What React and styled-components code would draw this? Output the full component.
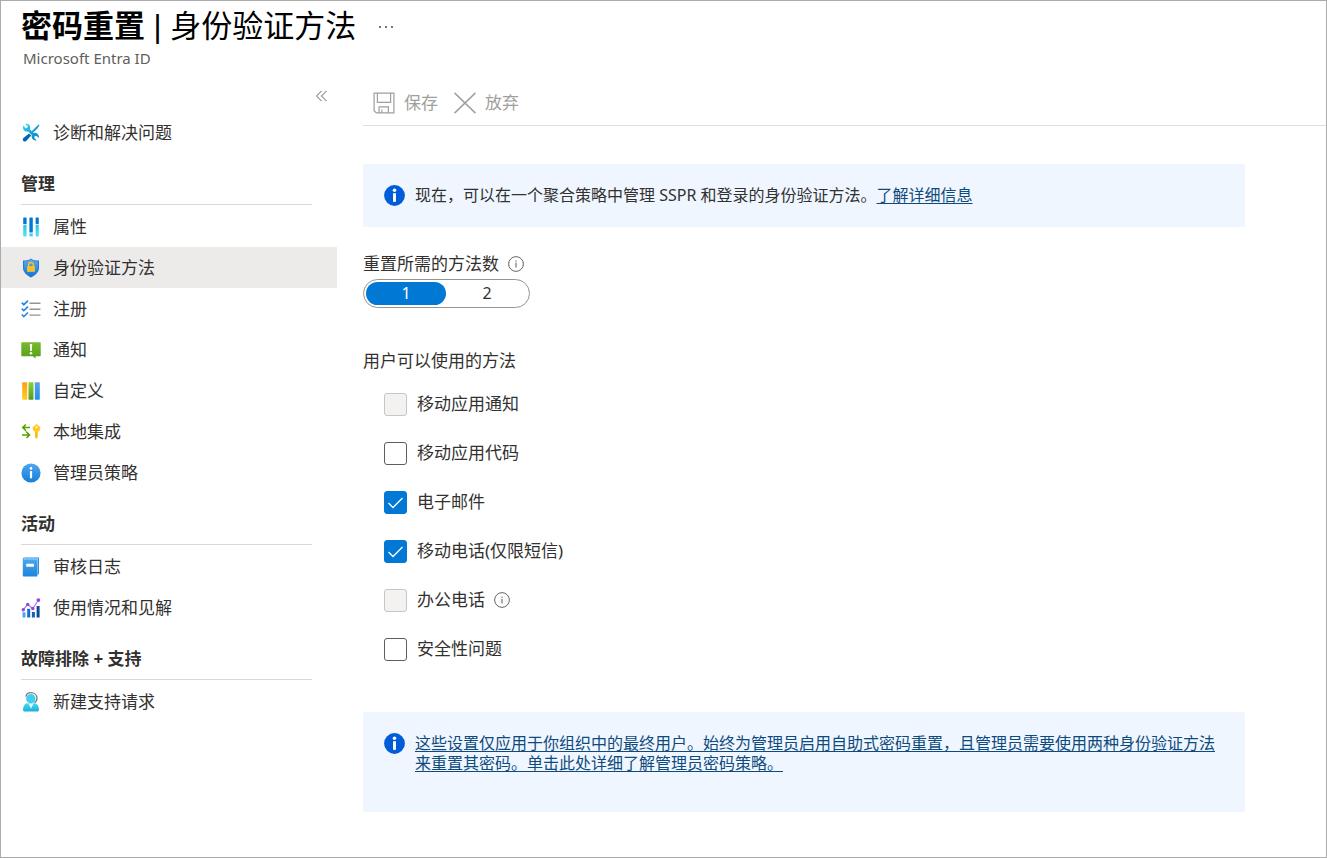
import React, { useState } from 'react'
import styled, { createGlobalStyle } from 'styled-components'

const GlobalStyle = createGlobalStyle`
  * {
    box-sizing: border-box;
  }

  body {
    margin: 0;
    background: #fff;
    color: #323130;
    font-family: 'Noto Sans', 'Noto Sans CJK SC', sans-serif;
    font-size: 17px;
    line-height: 22px;
  }

  button, input {
    font: inherit;
  }

  svg {
    display: block;
    flex: none;
  }
`

const Page = styled.div`
  display: flex;
  flex-direction: column;
  min-height: 100vh;
  border: 1px solid #ababab;
`

const Header = styled.header`
  padding: 4px 20px 0;
`

const TitleRow = styled.div`
  display: flex;
  align-items: center;
  gap: 22px;
`

const Title = styled.h1`
  margin: 0;
  color: #000;
  font-family: 'Liberation Sans', 'Noto Sans CJK SC', sans-serif;
  font-size: 31px;
  font-weight: 400;
  line-height: 44px;

  b {
    font-weight: 700;
  }
`

const MoreButton = styled.button`
  display: flex;
  padding: 0;
  border: 0;
  background: none;
  color: #323130;
`

const Subtitle = styled.p`
  margin: 0;
  padding-left: 2px;
  color: #605e5c;
  font-size: 15px;
  line-height: 18px;
`

const Body = styled.div`
  display: flex;
  flex: 1;
`

const Sidebar = styled.nav`
  flex: none;
  width: 336px;
  padding-top: 23px;
`

const CollapseButton = styled.button`
  display: flex;
  margin: 0 8px 10px auto;
  padding: 0;
  border: 0;
  background: none;
  color: #605e5c;
`

const NavHeading = styled.h2`
  margin: 20px 25px 1px 20px;
  padding-bottom: 9px;
  border-bottom: 1px solid #d8d8d8;
  font-size: 17px;
  font-weight: 700;
  line-height: 22px;
`

const NavList = styled.ul`
  margin: 0;
  padding: 0;
  list-style: none;
`

const NavLink = styled.a`
  display: flex;
  align-items: center;
  gap: 12px;
  height: 41px;
  padding-left: 20px;
  background: ${props => (props.$active ? '#edebe9' : 'transparent')};
  color: inherit;
  text-decoration: none;
`

const Main = styled.main`
  flex: 1;
  min-width: 0;
  padding-left: 26px;
`

const Toolbar = styled.div`
  display: flex;
  align-items: center;
  gap: 16px;
  height: 59px;
  padding: 14px 10px 0;
  border-bottom: 1px solid #e1dfdd;
`

const ToolButton = styled.button`
  display: flex;
  align-items: center;
  gap: 9px;
  padding: 0;
  border: 0;
  background: none;
  color: #a19f9d;
`

const Content = styled.div`
  padding: 38px 81px 40px 0;
`

const Banner = styled.div`
  display: flex;
  align-items: flex-start;
  gap: 10px;
  padding: 21px 24px ${props => (props.$tall ? '39px' : '21px')} 21px;
  border-radius: 2px;
  background: #eff6ff;
  font-size: 16px;
  line-height: 20px;

  p {
    margin: 0;
  }

  a {
    color: #0f4a7c;
    text-decoration: underline;
    text-underline-offset: 2px;
  }
`

const Fieldset = styled.fieldset`
  min-width: 0;
  margin: ${props => props.$top} 0 0;
  padding: 0;
  border: 0;
`

const Legend = styled.legend`
  display: flex;
  align-items: center;
  gap: 9px;
  padding: 0;
`

const Toggle = styled.div`
  display: inline-grid;
  grid-template-columns: 80px 80px;
  gap: 1px;
  margin-top: 4px;
  padding: 2px;
  border: 1px solid #979593;
  border-radius: 15px;
  vertical-align: top;
`

const ToggleOption = styled.label`
  border-radius: 12px;
  font-size: 16px;
  line-height: 23px;
  text-align: center;

  &:has(input:checked) {
    background: #0078d4;
    color: #fff;
  }

  input {
    position: absolute;
    opacity: 0;
    pointer-events: none;
  }
`

const MethodList = styled.div`
  display: grid;
  gap: 25px;
  margin-top: 20px;
  padding-left: 21px;
`

const Method = styled.div`
  display: flex;
  align-items: center;
  gap: 9px;
  height: 24px;
`

const CheckLabel = styled.label`
  display: flex;
  align-items: center;
  gap: 10px;
`

const CheckBox = styled.span`
  display: grid;

  & > * {
    grid-area: 1 / 1;
  }

  svg {
    pointer-events: none;
  }
`

const CheckInput = styled.input`
  width: 23px;
  height: 23px;
  margin: 0;
  border: 1px solid #605e5c;
  border-radius: 3px;
  background: #fff;
  appearance: none;

  &:checked {
    border-color: #0078d4;
    background: #0078d4;
  }

  &:disabled {
    border-color: #c8c6c4;
    background: #f3f2f1;
  }
`

const Icon = ({ size = 20, children }) => (
  <svg width={size} height={size} viewBox="0 0 20 20" fill="none" aria-hidden="true">
    {children}
  </svg>
)

const Gradient = ({ id, from, to }) => (
  <linearGradient id={id} x1="0" y1="0" x2="0" y2="1">
    <stop stopColor={from} />
    <stop offset="1" stopColor={to} />
  </linearGradient>
)

const ToolsIcon = () => (
  <Icon>
    <defs>
      <linearGradient id="wrench" x1="2" y1="2" x2="18" y2="18" gradientUnits="userSpaceOnUse">
        <stop stopColor="#32d4f5" />
        <stop offset="1" stopColor="#0078b8" />
      </linearGradient>
    </defs>
    <path d="M17.7 1.5l.8.8-2.1 3.1-6.2 6.2-1.4-1.4L15 4l2.7-2.5z" fill="#1a9ad7" />
    <path d="M8 10.400l2.200 2.200-5 5.300c-.8.8-2 .8-2.800 0s-.8-2 0-2.800L8 10.400z" fill="#0067b0" />
    <path d="M2.200 2.600l2.500 2.600 1.600-.5.500-1.800-2.400-2c2.300-.6 4.800 1 4.800 3.700 0 .7-.1 1.200-.3 1.700l3.500 3.600c1.500-.5 3.100-.2 4.300 1 1.100 1.100 1.400 2.700 1 4l-2.300-2.200-1.700.5-.5 1.700 2.400 2.300c-2.400.8-5-.8-5-3.600 0-.6.1-1 .2-1.500L7.200 8.400c-1.400.4-3 .1-4.100-1-1.200-1.300-1.500-3.200-.9-4.800z" fill="url(#wrench)" />
  </Icon>
)

const PropertiesIcon = () => (
  <Icon>
    <defs>
      <Gradient id="bar" from="#35c3df" to="#50e6ff" />
    </defs>
    <rect x="2.2" y="0.4" width="3.4" height="6.8" rx=".6" fill="#0078d4" />
    <rect x="2.2" y="8" width="3.4" height="11.6" rx=".6" fill="url(#bar)" />
    <rect x="8.4" y="0.4" width="3.4" height="15.2" rx=".6" fill="#0078d4" />
    <rect x="8.4" y="16.6" width="3.4" height="3" rx=".6" fill="url(#bar)" />
    <rect x="14.6" y="0.4" width="3.2" height="6.8" rx=".6" fill="#0078d4" />
    <rect x="14.6" y="8" width="3.2" height="11.6" rx=".6" fill="url(#bar)" />
  </Icon>
)

const ShieldIcon = () => (
  <Icon>
    <defs>
      <Gradient id="shield" from="#5ea8f0" to="#1673d3" />
    </defs>
    <path d="M10 .4C7.5 2.4 5 2.5 2 2.6v7.1c0 4.7 4 7.7 8 9.9 4-2.2 8-5.2 8-9.9V2.6C15 2.5 12.5 2.4 10 .4z" fill="#1b7adb" />
    <path d="M10 1.3C7.7 3 5.4 3.4 2.9 3.4v6.3c0 4.1 3.5 6.8 7.1 8.9 3.6-2.1 7.1-4.8 7.1-8.9V3.4C14.6 3.4 12.3 3 10 1.3z" fill="url(#shield)" />
    <path d="M7.6 9V7a2.4 2.4 0 0 1 4.8 0v2" stroke="#ffc21a" strokeWidth="1.5" />
    <rect x="6.2" y="8.2" width="7.6" height="5.6" rx=".6" fill="#ffd02e" />
    <path d="M7.4 10h5.2M7.4 12h5.2" stroke="#e8a400" strokeWidth=".8" />
  </Icon>
)

const ChecklistIcon = () => (
  <Icon>
    <path d="M8.5 4.3h11M8.5 10.2h11M8.5 16.1h11" stroke="#949494" strokeWidth="1.4" />
    <path d="M.8 3.7l2 2L7 1.7M.8 9.6l2 2L7 7.6M.8 15.5l2 2L7 13.5" stroke="#2b88e0" strokeWidth="1.7" />
  </Icon>
)

const NotificationIcon = () => (
  <Icon>
    <defs>
      <Gradient id="note" from="#76bc2d" to="#5a9c1c" />
    </defs>
    <path d="M.8 2.2h18.4c.3 0 .5.200.5.500v13c0 .3-.2.500-.5.500h-4.600v2.400L11.800 16.200h-11c-.3 0-.5-.2-.5-.5v-13c0-.3.200-.5.500-.5z" fill="url(#note)" />
    <path d="M8.8 4h2.4l-.4 7H9.200z" fill="#fff" />
    <circle cx="10" cy="13.2" r="1.3" fill="#fff" />
  </Icon>
)

const CustomizeIcon = () => (
  <Icon>
    <defs>
      <Gradient id="yellow" from="#ff9a1f" to="#ffcf1a" />
      <Gradient id="green" from="#86d633" to="#5e9624" />
      <Gradient id="blue" from="#5ea0ef" to="#1b93eb" />
    </defs>
    <rect x="1.2" y="1.3" width="5" height="17.4" rx=".6" fill="url(#yellow)" />
    <rect x="7.5" y="1.3" width="5" height="17.4" rx=".6" fill="url(#green)" />
    <rect x="13.8" y="1.3" width="5" height="17.4" rx=".6" fill="url(#blue)" />
  </Icon>
)

const IntegrationIcon = () => (
  <Icon>
    <path d="M9 5.5H1.8M4.8 2.500l-3 3 3 3" stroke="#57a300" strokeWidth="1.6" />
    <path d="M1 13h7.500M5.500 10l3 3-3 3" stroke="#57a300" strokeWidth="1.6" />
    <path d="M1.500 5.500L8.500 13" stroke="#57a300" strokeWidth="1" />
    <path d="M15.500 2l4 3.500-1 3.200-1.700 1v5.800L15.500 17 14 15.500V9.700l-1.600-1-1-3.200z" fill="#ffc91f" />
    <circle cx="15.500" cy="5.200" r="1" fill="#fff" />
    <path d="M15.400 10v5" stroke="#f29d00" strokeWidth=".6" />
  </Icon>
)

const PolicyIcon = () => (
  <Icon>
    <defs>
      <Gradient id="policy" from="#4fa5f0" to="#147fd9" />
    </defs>
    <circle cx="10" cy="10" r="9.6" fill="url(#policy)" />
    <circle cx="10" cy="5.4" r="1.3" fill="#fff" />
    <rect x="8.9" y="8" width="2.2" height="7.4" rx=".8" fill="#fff" />
  </Icon>
)

const LogIcon = () => (
  <Icon>
    <defs>
      <Gradient id="book" from="#4eaaf0" to="#1b85dc" />
    </defs>
    <path d="M3.5.5h14.3v17.2H3.5z" fill="#a5d3f4" />
    <path d="M17.2.5h.8v16.8h-.8z" fill="#1a7bc8" />
    <path d="M3.2.4h14v1.2h-14c-.6 0-.6.9 0 .9h13.2v16.4c0 .4-.3.7-.7.7H3c-.7 0-1.2-.5-1.2-1.2V1.6C1.800.9 2.400.4 3.200.4z" fill="url(#book)" />
    <rect x="5.2" y="6.8" width="7.8" height="3" rx=".4" fill="#fff" />
  </Icon>
)

const UsageIcon = () => (
  <Icon>
    <rect x="1.5" y="14.3" width="3" height="5.2" fill="#4fa3f2" />
    <rect x="6.2" y="10.8" width="3" height="8.7" fill="#0f6fcf" />
    <rect x="10.9" y="14" width="3" height="5.5" fill="#1b5fae" />
    <rect x="15.6" y="8" width="3" height="11.5" fill="#0a4c94" />
    <path d="M2.2 12l4.4-5.6 5.2 4.2L17.5 2" stroke="#b77af0" strokeWidth="1.3" />
    <circle cx="2.3" cy="11.7" r="1.7" fill="#8a4be0" />
    <circle cx="6.7" cy="6.4" r="1.7" fill="#8a4be0" />
    <circle cx="11.8" cy="10.5" r="1.7" fill="#8a4be0" />
    <circle cx="17.4" cy="2.1" r="1.9" fill="#8a4be0" />
  </Icon>
)

const SupportIcon = () => (
  <Icon>
    <defs>
      <Gradient id="person" from="#4fd8f5" to="#16b0d6" />
    </defs>
    <path d="M4.8 4.6C5.4 2 7.200.7 10 .7c3.200 0 6 2 6 5.600 0 2-.5 3.400-2.700 4.400" stroke="#7a7a7a" strokeWidth="1.3" />
    <path d="M2 17.400c.5-3.700 1.600-6.200 4.800-6.200h6.400c3.200 0 4.300 2.500 4.800 6.200.1 1.200-.7 2.200-1.900 2.200H3.900c-1.200 0-2-1-1.900-2.200z" fill="url(#person)" />
    <path d="M7.400 11.200L10 16.800l2.600-5.600z" fill="#e3f9ff" />
    <circle cx="9.8" cy="6.8" r="4.7" fill="#3fd0ef" />
  </Icon>
)

const SaveIcon = () => (
  <Icon size={22}>
    <path d="M1 1h18v18H3l-2-2zM4 1v8.5h12V1M5.5 19v-5.500h8.500V19M8 19v-3" stroke="currentColor" strokeWidth="1.1" />
  </Icon>
)

const DiscardIcon = () => (
  <Icon size={22}>
    <path d="M.5.8l19 18.4M19.5.8L.5 19.2" stroke="currentColor" strokeWidth="1.3" />
  </Icon>
)

const BannerIcon = () => (
  <Icon size={21}>
    <circle cx="10" cy="10" r="9.9" fill="#015cda" />
    <circle cx="10" cy="5" r="1.7" fill="#fff" />
    <rect x="8.6" y="7.8" width="2.8" height="8.2" fill="#fff" />
  </Icon>
)

const HintIcon = () => (
  <Icon size={16}>
    <circle cx="10" cy="10" r="9.2" stroke="#605e5c" strokeWidth="1.2" />
    <path d="M10 8.5v6M10 5.5v1.6" stroke="#605e5c" strokeWidth="1.3" />
  </Icon>
)

const CheckMark = () => (
  <svg width="23" height="23" viewBox="0 0 23 23" fill="none" aria-hidden="true">
    <path d="M4.500 12l4.500 4.500L18.500 7" stroke="#fff" strokeWidth="1.3" />
  </svg>
)

const manage = [
  { label: '属性', icon: PropertiesIcon },
  { label: '身份验证方法', icon: ShieldIcon, active: true },
  { label: '注册', icon: ChecklistIcon },
  { label: '通知', icon: NotificationIcon },
  { label: '自定义', icon: CustomizeIcon },
  { label: '本地集成', icon: IntegrationIcon },
  { label: '管理员策略', icon: PolicyIcon },
]

const activity = [
  { label: '审核日志', icon: LogIcon },
  { label: '使用情况和见解', icon: UsageIcon },
]

const methods = [
  { id: 'app-notification', label: '移动应用通知', disabled: true },
  { id: 'app-code', label: '移动应用代码' },
  { id: 'email', label: '电子邮件' },
  { id: 'mobile-phone', label: '移动电话(仅限短信)' },
  { id: 'office-phone', label: '办公电话', disabled: true, hint: true },
  { id: 'questions', label: '安全性问题' },
]

function NavItems({ items }) {
  return (
    <NavList>
      {items.map(({ label, icon: ItemIcon, active }) => (
        <li key={label}>
          <NavLink href="#" $active={active} aria-current={active ? 'page' : undefined}>
            <ItemIcon />
            {label}
          </NavLink>
        </li>
      ))}
    </NavList>
  )
}

export default function App() {
  const [required, setRequired] = useState(1)
  const [selected, setSelected] = useState(['email', 'mobile-phone'])

  const toggleMethod = id =>
    setSelected(selected.includes(id) ? selected.filter(item => item !== id) : [...selected, id])

  return (
    <Page lang="zh-CN">
      <GlobalStyle />
      <Header>
        <TitleRow>
          <Title>
            <b>密码重置</b> | 身份验证方法
          </Title>
          <MoreButton aria-label="更多">
            <svg width="16" height="4" viewBox="0 0 16 4" fill="currentColor" aria-hidden="true">
              <circle cx="2" cy="2" r="0.9" />
              <circle cx="8" cy="2" r="0.9" />
              <circle cx="14" cy="2" r="0.9" />
            </svg>
          </MoreButton>
        </TitleRow>
        <Subtitle>Microsoft Entra ID</Subtitle>
      </Header>
      <Body>
        <Sidebar>
          <CollapseButton aria-label="折叠">
            <svg width="14" height="12" viewBox="0 0 14 12" fill="none" stroke="currentColor" aria-hidden="true">
              <path d="M6.500 1l-5 5 5 5M11.500 1l-5 5 5 5" />
            </svg>
          </CollapseButton>
          <NavItems items={[{ label: '诊断和解决问题', icon: ToolsIcon }]} />
          <NavHeading>管理</NavHeading>
          <NavItems items={manage} />
          <NavHeading>活动</NavHeading>
          <NavItems items={activity} />
          <NavHeading>故障排除 + 支持</NavHeading>
          <NavItems items={[{ label: '新建支持请求', icon: SupportIcon }]} />
        </Sidebar>
        <Main>
          <Toolbar>
            <ToolButton disabled>
              <SaveIcon />
              保存
            </ToolButton>
            <ToolButton disabled>
              <DiscardIcon />
              放弃
            </ToolButton>
          </Toolbar>
          <Content>
            <Banner>
              <BannerIcon />
              <p>
                现在，可以在一个聚合策略中管理 SSPR 和登录的身份验证方法。<a href="#">了解详细信息</a>
              </p>
            </Banner>
            <Fieldset $top="26px">
              <Legend>
                重置所需的方法数
                <HintIcon />
              </Legend>
              <Toggle>
                {[1, 2].map(count => (
                  <ToggleOption key={count}>
                    <input
                      type="radio"
                      name="required"
                      checked={required === count}
                      onChange={() => setRequired(count)}
                    />
                    {count}
                  </ToggleOption>
                ))}
              </Toggle>
            </Fieldset>
            <Fieldset $top="42px">
              <Legend>用户可以使用的方法</Legend>
              <MethodList>
                {methods.map(({ id, label, disabled, hint }) => (
                  <Method key={id}>
                    <CheckLabel>
                      <CheckBox>
                        <CheckInput
                          type="checkbox"
                          disabled={disabled}
                          checked={selected.includes(id)}
                          onChange={() => toggleMethod(id)}
                        />
                        {selected.includes(id) && <CheckMark />}
                      </CheckBox>
                      {label}
                    </CheckLabel>
                    {hint && <HintIcon />}
                  </Method>
                ))}
              </MethodList>
            </Fieldset>
            <Fieldset as="div" $top="51px">
              <Banner $tall>
                <BannerIcon />
                <p>
                  <a href="#">
                    这些设置仅应用于你组织中的最终用户。始终为管理员启用自助式密码重置，且管理员需要使用两种身份验证方法来重置其密码。单击此处详细了解管理员密码策略。
                  </a>
                </p>
              </Banner>
            </Fieldset>
          </Content>
        </Main>
      </Body>
    </Page>
  )
}
